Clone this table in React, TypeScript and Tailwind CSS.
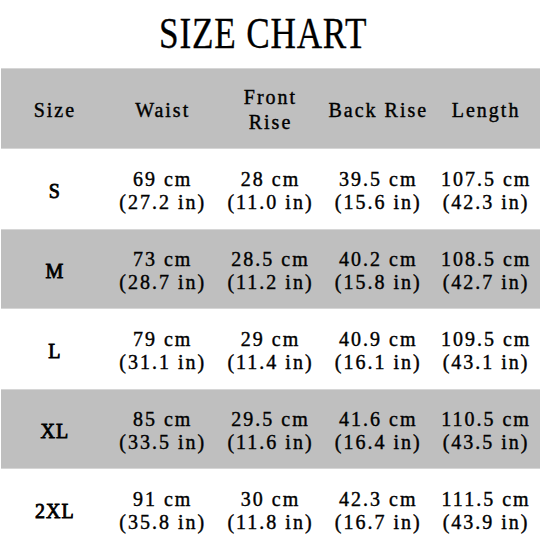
const rows = [
  { size: 'S', cells: [['69 cm', '(27.2 in)'], ['28 cm', '(11.0 in)'], ['39.5 cm', '(15.6 in)'], ['107.5 cm', '(42.3 in)']] },
  { size: 'M', cells: [['73 cm', '(28.7 in)'], ['28.5 cm', '(11.2 in)'], ['40.2 cm', '(15.8 in)'], ['108.5 cm', '(42.7 in)']] },
  { size: 'L', cells: [['79 cm', '(31.1 in)'], ['29 cm', '(11.4 in)'], ['40.9 cm', '(16.1 in)'], ['109.5 cm', '(43.1 in)']] },
  { size: 'XL', cells: [['85 cm', '(33.5 in)'], ['29.5 cm', '(11.6 in)'], ['41.6 cm', '(16.4 in)'], ['110.5 cm', '(43.5 in)']] },
  { size: '2XL', cells: [['91 cm', '(35.8 in)'], ['30 cm', '(11.8 in)'], ['42.3 cm', '(16.7 in)'], ['111.5 cm', '(43.9 in)']] },
]

export default function App() {
  return (
    <div className="w-[540px] h-[540px] overflow-hidden bg-white text-black font-['Liberation_Serif',serif]">
      <div className="h-[68px] flex items-center justify-center pb-[1px] pr-[14px]">
        <h1 className="inline-block text-[44px] leading-none tracking-[1px] scale-x-[0.8] [-webkit-text-stroke:0.3px_black]">
          SIZE CHART
        </h1>
      </div>
      <div className="flex flex-col text-[20px] tracking-[2px] leading-[23px] [-webkit-text-stroke:0.4px_black]">
        <div className="grid grid-cols-5 h-[81px] items-center text-center bg-[#bfbfbf] border-y border-[#d6d6d6] ml-[1px] pt-[3px]">
          <div>Size</div>
          <div>Waist</div>
          <div className="leading-[25px]">Front<br />Rise</div>
          <div>Back Rise</div>
          <div>Length</div>
        </div>
        {rows.map((r, i) => (
          <div
            key={r.size}
            className={
              'grid grid-cols-5 h-[80px] items-center text-center ml-[1px] pt-[4px] ' +
              (i % 2 === 1 ? 'bg-[#bfbfbf] border-y border-[#d6d6d6]' : 'bg-white')
            }
          >
            <div className="tracking-[1px] [-webkit-text-stroke:0.8px_black]">{r.size}</div>
            {r.cells.map((c, j) => (
              <div key={j}>
                {c[0]}
                <br />
                {c[1]}
              </div>
            ))}
          </div>
        ))}
      </div>
    </div>
  )
}
